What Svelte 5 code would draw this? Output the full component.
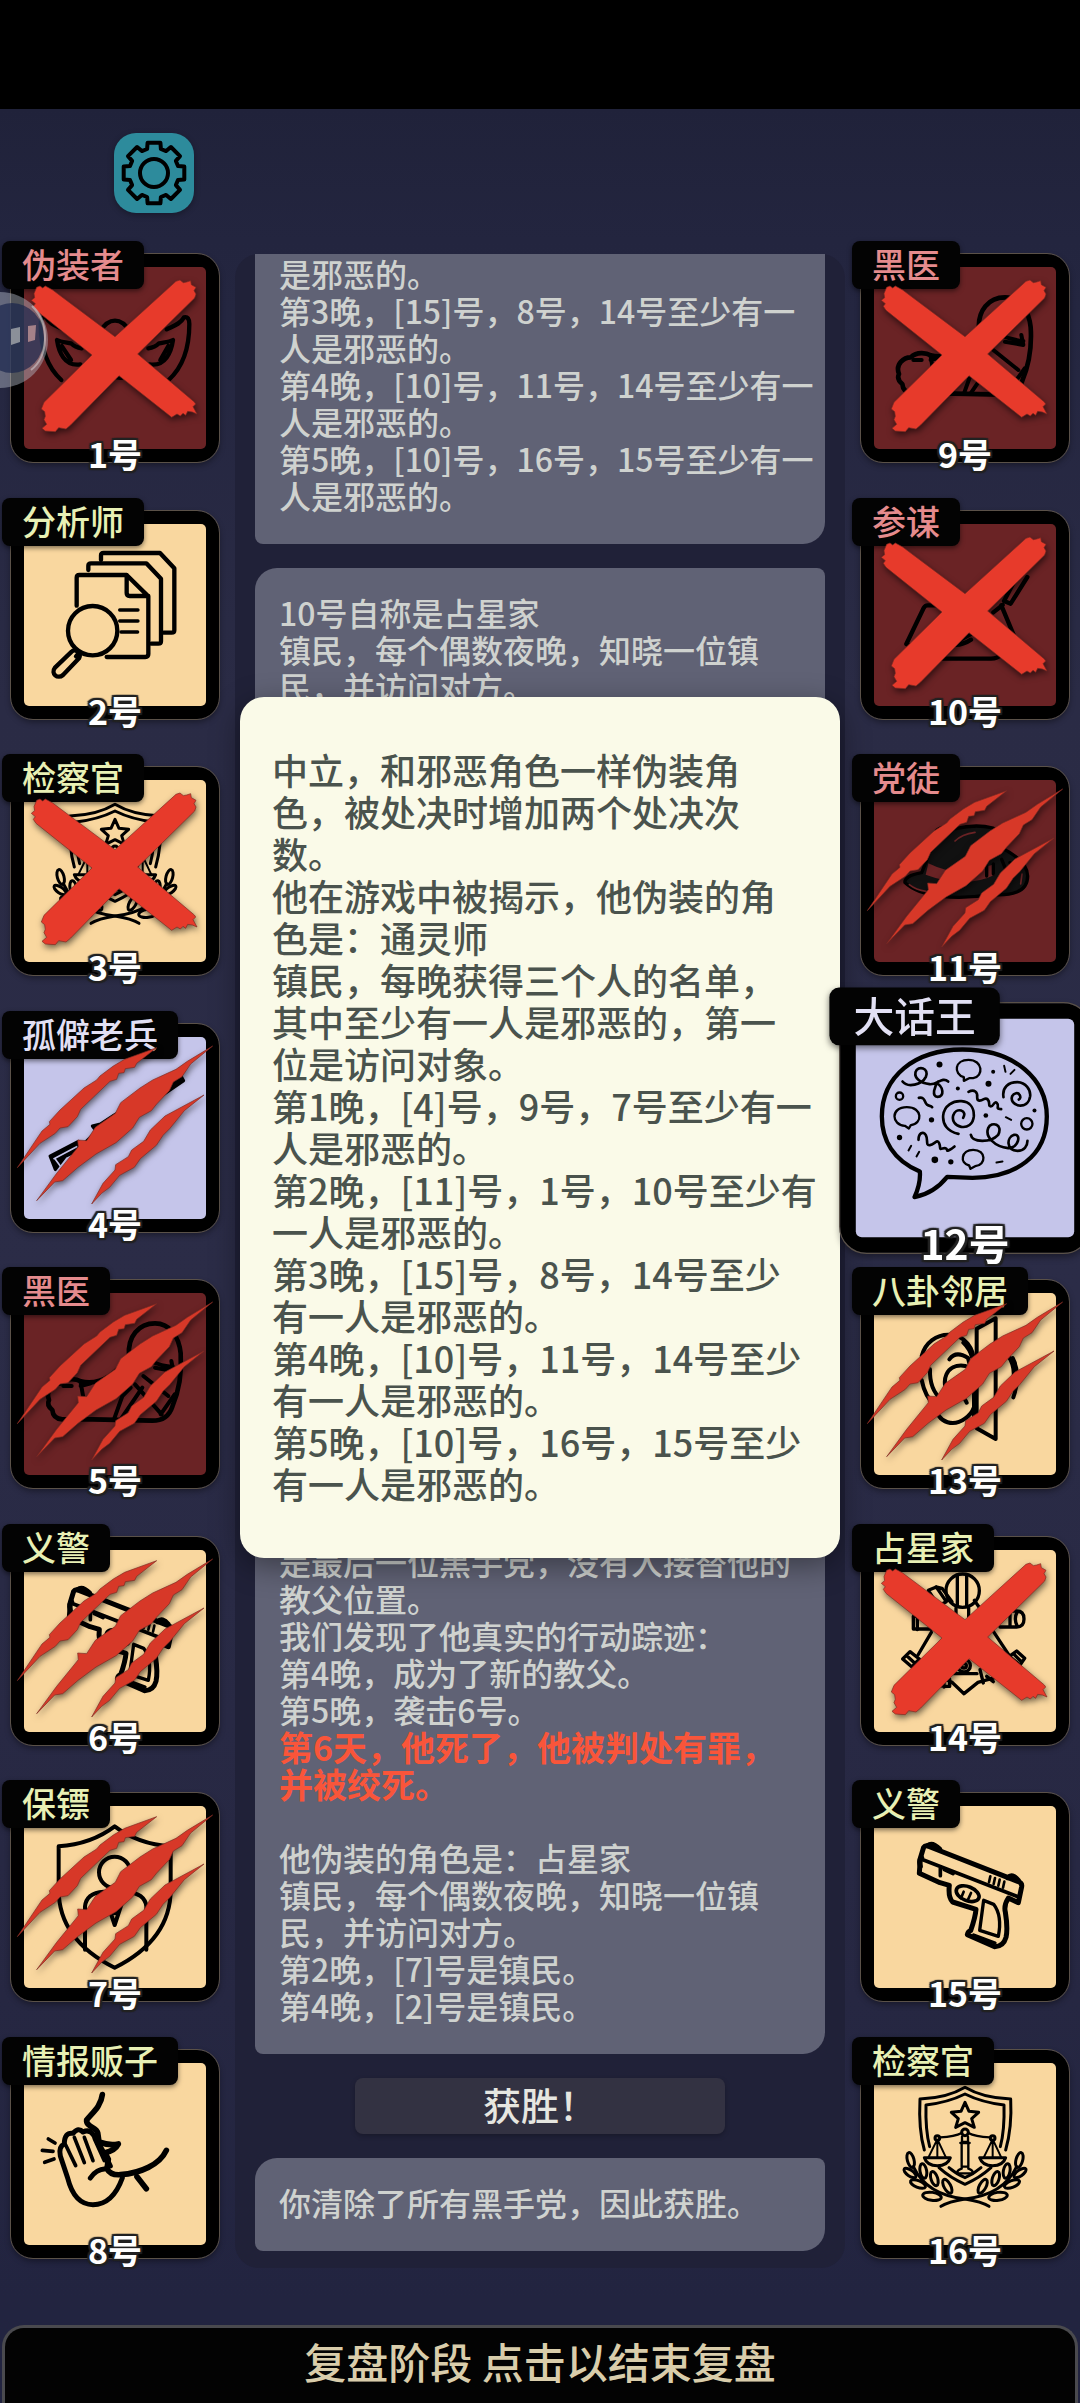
<script lang="ts">
    type Player = {
        id: number;
        role: string;
        side: 'evil' | 'town' | 'neutral';
        icon: string;
        mark?: 'cross' | 'claw';
        active?: boolean;
    }

    const left: Player[] = [
        { id: 1, role: '伪装者', side: 'evil', icon: 'mask', mark: 'cross' },
        { id: 2, role: '分析师', side: 'town', icon: 'analyst' },
        { id: 3, role: '检察官', side: 'town', icon: 'law', mark: 'cross' },
        { id: 4, role: '孤僻老兵', side: 'neutral', icon: 'rifle', mark: 'claw' },
        { id: 5, role: '黑医', side: 'evil', icon: 'doctor', mark: 'claw' },
        { id: 6, role: '义警', side: 'town', icon: 'pistol', mark: 'claw' },
        { id: 7, role: '保镖', side: 'town', icon: 'guard', mark: 'claw' },
        { id: 8, role: '情报贩子', side: 'town', icon: 'whisper' },
    ]

    const right: Player[] = [
        { id: 9, role: '黑医', side: 'evil', icon: 'doctor', mark: 'cross' },
        { id: 10, role: '参谋', side: 'evil', icon: 'adviser', mark: 'cross' },
        { id: 11, role: '党徒', side: 'evil', icon: 'hat', mark: 'claw' },
        { id: 12, role: '大话王', side: 'neutral', icon: 'talk', active: true },
        { id: 13, role: '八卦邻居', side: 'town', icon: 'ear', mark: 'claw' },
        { id: 14, role: '占星家', side: 'town', icon: 'stars', mark: 'cross' },
        { id: 15, role: '义警', side: 'town', icon: 'pistol' },
        { id: 16, role: '检察官', side: 'town', icon: 'law' },
    ]

    const nightLog = `是邪恶的。
第3晚，[15]号，8号，14号至少有一
人是邪恶的。
第4晚，[10]号，11号，14号至少有一
人是邪恶的。
第5晚，[10]号，16号，15号至少有一
人是邪恶的。`

    const claimLog = `10号自称是占星家
镇民，每个偶数夜晚，知晓一位镇
民，并访问对方。`

    const traceLog = `是最后一位黑手党，没有人接替他的
教父位置。
我们发现了他真实的行动踪迹：
第4晚，成为了新的教父。
第5晚，袭击6号。`

    const deathLog = `第6天，他死了，他被判处有罪，
并被绞死。`

    const disguiseLog = `他伪装的角色是：占星家
镇民，每个偶数夜晚，知晓一位镇
民，并访问对方。
第2晚，[7]号是镇民。
第4晚，[2]号是镇民。`

    const detail = `中立，和邪恶角色一样伪装角
色，被处决时增加两个处决次
数。
他在游戏中被揭示，他伪装的角
色是：通灵师
镇民，每晚获得三个人的名单，
其中至少有一人是邪恶的，第一
位是访问对象。
第1晚，[4]号，9号，7号至少有一
人是邪恶的。
第2晚，[11]号，1号，10号至少有
一人是邪恶的。
第3晚，[15]号，8号，14号至少
有一人是邪恶的。
第4晚，[10]号，11号，14号至少
有一人是邪恶的。
第5晚，[10]号，16号，15号至少
有一人是邪恶的。`

    let showDetail = $state(true)

    // eight-toothed gear outline around the origin
    const gear = (() => {
        const pts: string[] = []
        for (let i = 0; i < 8; i++) {
            const a = i * 45 - 90
            for (const [d, r] of [[-16, 25], [-12, 31], [12, 31], [16, 25]]) {
                const t = ((a + d) * Math.PI) / 180
                pts.push(`${(Math.cos(t) * r).toFixed(1)},${(Math.sin(t) * r).toFixed(1)}`)
            }
        }
        return pts.join(' ')
    })()
</script>

{#snippet wreath()}
    <path d="M175 365Q215 450 330 462Q380 470 402 484" />
    <ellipse cx="167" cy="345" rx="10" ry="23" transform="rotate(-15 167 345)" />
    <ellipse cx="165" cy="384" rx="21" ry="9" transform="rotate(35 165 384)" />
    <ellipse cx="205" cy="378" rx="10" ry="22" transform="rotate(-10 205 378)" />
    <ellipse cx="189" cy="417" rx="24" ry="10" transform="rotate(22 189 417)" />
    <ellipse cx="238" cy="401" rx="10" ry="22" transform="rotate(-18 238 401)" />
    <ellipse cx="231" cy="454" rx="28" ry="12" transform="rotate(8 231 454)" />
    <ellipse cx="277" cy="424" rx="10" ry="23" transform="rotate(-28 277 424)" />
{/snippet}

{#snippet icon(name: string)}
    {#if name === 'mask'}
        <svg class="art" viewBox="33 42 624 624" stroke="#111" stroke-width="13">
            <path d="M300 275c15-25 30-33 45-33s30 8 45 33M500 268c20-10 40-15 52-36q16-4 16 20c0 60-15 125-62 168M190 268c-20-10-40-15-52-36q-16-4-16 20c0 60 15 125 62 168M325 395q20 22 42 18" />
            <path d="M445 325c15-2 25-8 32-15c15-3 32-4 42-10c-5 35-22 80-70 73M505 318l-24 42M245 325c-15-2-25-8-32-15c-15-3-32-4-42-10c5 35 22 80 70 73M185 318l28 42" />
        </svg>
    {:else if name === 'analyst'}
        <svg class="art" viewBox="0 0 624 624" stroke-width="13">
            <path d="M270 147v-14q0-7 8-7h169l43 46v186q0 7-8 7h-24" />
            <path d="M232 177v-13q0-7 8-7h166l44 46v188q0 7-8 7h-21" />
            <path d="M197 284v-84q0-8 8-8h142l65 64v173q0 9-9 9H287M347 192v54q0 9 9 9h56" />
            <path d="M326 297h55M326 330h55M330 363h50" stroke-width="10" />
            <circle cx="245" cy="359" r="74" />
            <path d="M205 424l-10 12M182 422l-50 48c-14 18 8 36 24 22l48-50c8-14-12-32-22-20z" />
        </svg>
    {:else if name === 'law'}
        <svg class="art" viewBox="18 15 624 624" stroke-width="9">
            <path d="M208 315C195 270 192 220 195 162Q275 160 330 127Q385 160 467 162C470 220 465 270 452 315M224 305C212 260 212 215 213 180Q280 172 330 147Q380 172 447 180C448 215 448 260 436 305M252 368Q285 398 330 418Q375 398 408 368M282 368Q305 388 330 398Q355 388 378 368" />
            <path d="M330 172l12 27 29 3-21 19 8 26-28-14-28 14 8-26-21-19 29-3z" />
            <path d="M255 277Q300 275 320 264M405 277Q360 275 340 264M321 275v16h18v-16M316 294h28M320 296v68M340 296v68M306 385q0-10 14-14v-6h20v6q14 4 14 14z" stroke-width="7" />
            <circle cx="247" cy="279" r="7" /><circle cx="413" cy="279" r="7" /><circle cx="330" cy="262" r="10" />
            <path d="M208 338h78q-8 24-39 24t-39-24zM374 338h78q-8 24-39 24t-39-24z" />
            <path d="M245 287l-25 51M249 287l24 51M247 287v51M411 287l-25 51M415 287l24 51M413 287v51" stroke-width="6" />
            {@render wreath()}
            <g transform="translate(660 0) scale(-1 1)">{@render wreath()}</g>
        </svg>
    {:else if name === 'rifle'}
        <svg class="art" viewBox="33 852 624 624" stroke-width="9">
            <path d="M150 1248l85-44 14 10 40-40-12-16 24-6 40-26 200-122 10 18-90 62-190 130-75 35-30 40z" fill="#000" />
            <path d="M162 1256l68-36M166 1258l22 30" stroke="#c5c5ea" stroke-width="5" />
        </svg>
    {:else if name === 'doctor'}
        <svg class="art" viewBox="33 62 624 624" stroke-width="14">
            <path d="M387 290c-5-60 30-98 78-98 45 0 72 40 77 90 4 60-4 110-25 160-10 30-30 42-60 42l-180-4h-90q-28-2-30-28-18-14-10-30c-12-30 15-50 35-50 20-20 50-12 60-6 40 10 90 0 145-76z" />
            <path d="M242 370l10 55M242 380l30-8M342 480l25-70 25-25M362 480l65-95M405 375l80 90M430 350l75 60M450 305q35 15 70 18M465 325l55 10-6-30M482 465l42-60M190 380h25" stroke-width="12" />
        </svg>
    {:else if name === 'pistol'}
        <svg class="art" viewBox="0 0 624 624" stroke-width="15">
            <path d="M178 196l10-33q4-6 12-4l270 106q14 4 12 16l-10 48-30-14q-14 22-9 42 8 50 2 76-8 28-34 28l-82-36q2-10 10-12 14-40 16-64l-70-22q-14-14-10-50l-28-8-62-28z" />
            <path d="M180 198l291 113M238 222v26M250 230l26 12" stroke-width="11" />
            <path d="M200 158q14-12 36 10M440 254q14-14 32 8M178 220q-6-20 4-26" />
            <ellipse cx="320" cy="302" rx="36" ry="21" transform="rotate(22 320 302)" stroke-width="11" />
            <path d="M368 322l-12 90 56 18c8-40 6-70-14-96zM338 426l64 24" stroke-width="10" />
            <path d="M308 296l-8 20M330 300l-10 22M388 250l-4 18M402 255l-4 18M416 260l-4 18M430 266l-4 18" stroke-width="8" />
        </svg>
    {:else if name === 'guard'}
        <svg class="art" viewBox="0 0 624 624" stroke-width="12">
            <path d="M311 100c50 38 110 56 168 60v130c0 120-80 190-168 234-88-44-168-114-168-234V160c58-4 118-22 168-60z" />
            <circle cx="311" cy="238" r="47" />
            <path d="M222 470V340q4-40 56-44l33 100 33-100q58 4 62 44v130M290 330h42l-12 30h-18z" />
        </svg>
    {:else if name === 'whisper'}
        <svg class="art" viewBox="0 0 624 624" stroke-width="15">
            <path d="M274 134c-4 36-32 56-47 76-3 20 30 22 33 38l4 28q32 12 58 6-10 20-40 26l10 20-4 28q10 20 40 18c60-4 118-30 138-73M378 380l28 36" stroke-width="17" />
            <path d="M334 384c-18 50-44 80-88 80s-66-40-76-80l-22-66q-6-28 12-36 0-36 26-32 16-20 30-4 20-10 32 10c20 30 36 62 50 92M238 384q16-26 46-28" />
            <path d="M164 285l30 62M190 262l30 76M220 262l26 70M250 266l30 66" stroke-width="11" />
            <path d="M112 267l20 12M94 301l32 3M101 337l28-10" stroke-width="11" />
        </svg>
    {:else if name === 'adviser'}
        <svg class="art" viewBox="0 0 624 624" stroke-width="13">
            <path d="M250 283h-50q-8 0-12 8l-52 108 90 44h164q20 0 30-12l48-35-47-113M499 198l-50 80-20-8 42-80M425 282l-28 22M270 400q30 6 60-14M300 385l40-22" />
        </svg>
    {:else if name === 'hat'}
        <svg class="art" viewBox="123 83 624 624" stroke-width="10">
            <path d="M255 430q-4-20 50-30l20-50c5-50 15-80 42-86q20-4 40 4c40-10 80-10 112-2q20 8 26 60c40 20 78 50 78 84 0 50-50 60-110 56-100 16-210 10-258-36z" fill="#111" />
            <path d="M325 372q60 30 120 26l80-24v32q-90 44-208 0z" fill="#6a2325" stroke="none" />
            <path d="M405 305q20-20 60-26M268 436q20 16 50 20M606 404l-4 30" stroke="#6a2325" stroke-width="5" />
            <path d="M500 380v30M520 374v30M545 360l16 40M570 370l20 30" />
        </svg>
    {:else if name === 'talk'}
        <svg class="art" viewBox="63 790 749 749" stroke-width="8">
            <path d="M302 1295C222 1262 188 1200 188 1130C188 1010 285 930 430 929C590 929 683 1020 683 1130C683 1250 590 1312 460 1314L384 1311Q345 1360 286 1372Q305 1330 302 1295z" stroke-width="13" />
            <path d="M434 1012c-32-10-28-52 14-52 44 0 46 50 14 55h-12l-16 8zM257 1158c-40-2-45-56 6-56 48 0 48 50 12 54l-6 10zM450 1277c-30-6-24-47 12-47 40 0 40 46 6 49l-14 8z" stroke-width="7" />
            <path d="M418 1182c-34-6-48-30-46-55 3-30 30-45 55-43 25 2 38 20 37 45-2 25-20 35-38 32-18-3-28-18-24-34 4-12 14-18 24-15 10 3 12 12 6 22M553 1072c-5-30 15-45 42-45 25 1 40 22 38 42-3 22-18 30-34 28-15-3-25-15-20-28 5-10 18-12 22-4 4 6 3 12-2 14" />
            <path d="M250 1025c16 20 58 10 70-14 12-26-24-36-31-14-4 18 15 33 42 36 22 3 38-24 56-8M357 1025c-12 14-20 46-2 46 22 0 18-32-4-42M299 1074c20-4 16 14 24 20 6 6 12 2 16 8" />
            <path d="M448 1056c18-10 28 2 26 16 0 14 10 12 20 6s16 4 16 14 8 10 14 0 14 0 12 8 6 8 10 8M298 1200c0-20 14-28 22-14s-2 32 12 30 22-20 28-6-2 20 10 16 14 4 14 6 10-2 22-12" />
            <path d="M455 1185c4 24 60 24 82 0 16-32-20-42-30-20-10 26 20 56 60 60 32 0 40-44 18-40-24 8-24 46 10 48 20 0 30-14 30-30" />
            <path d="M555 978l4 18M586 990l-12 12M268 1232l8-14M292 1250l8-14M560 1132l16 8M532 1268l18-3" stroke-width="6" />
            <circle cx="241" cy="1069" r="11" stroke-width="7" /><circle cx="623" cy="1152" r="17" stroke-width="7" />
            <g fill="#000" stroke="none">
                <circle cx="361" cy="974" r="9" /><circle cx="508" cy="1032" r="9" /><circle cx="522" cy="996" r="6" /><circle cx="416" cy="1046" r="6" />
                <circle cx="337" cy="1140" r="8" /><circle cx="500" cy="1127" r="7" /><circle cx="241" cy="1193" r="8" /><circle cx="347" cy="1260" r="10" />
                <circle cx="395" cy="1266" r="8" /><circle cx="646" cy="1112" r="6" />
            </g>
        </svg>
    {:else if name === 'ear'}
        <svg class="art" viewBox="123 62 624 624" stroke-width="12">
            <path d="M305 290c10-40 45-66 85-64 45 2 72 40 72 85v190M305 362c8 40 20 60 40 76 10 60 60 62 90 40q20-14 26-32M330 330q-2 60 34 90M388 300q20-28 56-4 14 40-8 60" />
            <path d="M436 320c-60-10-75 50-50 85M420 350c-22 10-16 40 0 50q16 20 20 30M470 208l57-31v362l-57-32zM565 290q28 40 8 100M578 296q26 50 2 118M430 250q20 20 26 44" />
        </svg>
    {:else if name === 'stars'}
        <svg class="art" viewBox="123 832 624 624" stroke-width="10">
            <circle cx="428" cy="993" r="50" />
            <path d="M412 946v94M440 946v94M408 1045v50M446 1045v50M325 992l24-10 30 44-24 12zM348 982l18 4 30 40M375 1026l14-8M463 1022l14 20" />
            <path d="M280 1070v38h55M292 1066v44M280 1070h20M540 1102h50q22 0 22-24t-22-24h-20v48M592 1056q-12 22 0 44M334 1118l-40 68M520 1115l46 70" />
            <path d="M248 1198l22-22 28 22-22 24zM262 1190l24 22M568 1190l22-16 24 22-14 20zM580 1182l24 24" />
            <circle cx="432" cy="1218" r="19" /><circle cx="432" cy="1218" r="7" />
            <path d="M395 1242h76M340 1262l30-6 26 12 36 34 42-34 50-14M345 1278l44 2v-22M480 1230l10 40M372 1262v20M500 1250l20 16" />
        </svg>
    {/if}
{/snippet}

{#snippet card(p: Player)}
    <button class="card {p.side}" class:active={p.active} onclick={() => { if (p.active) showDetail = !showDetail }}>
        {@render icon(p.icon)}
        <span class="role">{p.role}</span>
        {#if p.mark === 'cross'}
            <svg class="mark" viewBox="33 42 624 624">
                <path fill="#e73a2b" d="M110 142l10-4 8 6 8-6 22 12 187 140 183-166 12-4 10 8 10-2 12-4 2 12 14 8-6 10 6 10-4 12-171 168 170 144 4 6-8 8 12 22-14-6-14-2-6 12-8-6-8 8-10-6-16 10-158-125-145 148-14 12-22-4-10 12-30-2-10-8 14-12-8-14 4-10-2-14-10-8 8-20 144-142-168-134-8-12 6-8-12-10 10-8-2-12z" />
            </svg>
        {:else if p.mark === 'claw'}
            <svg class="mark" viewBox="33 852 624 624">
                <g fill="#d73828">
                    <path d="M52 1283l74-110 24-20-2-8 32-35 72-66 38-24 10-12 40-30 34-20 96-35-60 47-6 12-28 4-4 12-16 2-6 18-20 6-88 84-10 22-28 30-24 4-14 16-46 30z" />
                    <path d="M110 1382l60-82 65-80-2-20 27 2 26-40 60-42 16-32 58-44 38-24 70-32 34-24 76-46-66 54-26 38-26 16-12 26-38 40-16 20-36 20-20 32-50 44-60 34-54 40-46 40-24 4z" />
                    <path d="M275 1392l34-62 36-40 2-16 38-24 10-20 36-26 20-34 44-42 117-63-59 47-44 54-20 20-20 30-48 40-18 26-44 24-30 36-24 18z" />
                </g>
            </svg>
        {/if}
        <span class="number">{p.id}号</span>
    </button>
{/snippet}

<div class="page">
    <div class="notch"></div>

    <header>
        <button class="settings" aria-label="设置">
            <svg viewBox="-40 -40 80 80">
                <polygon points={gear} />
                <circle r="14" />
            </svg>
        </button>
    </header>

    <main>
        <div class="column">
            {#each left as p}
                {@render card(p)}
            {/each}
        </div>

        <section class="center">
            <div class="log">
                <p class="message cut">{nightLog}</p>
                <p class="message">{claimLog}</p>
                <div class="message long">
                    <p>{traceLog}</p>
                    <p class="death">{deathLog}</p>
                    <p class="gap">{disguiseLog}</p>
                </div>
                <h2>获胜！</h2>
                <p class="message">你清除了所有黑手党，因此获胜。</p>
            </div>
            {#if showDetail}
                <div class="detail">{detail}</div>
            {/if}
        </section>

        <div class="column front">
            {#each right as p}
                {@render card(p)}
            {/each}
        </div>
    </main>

    <button class="finish">复盘阶段 点击以结束复盘</button>

    <button class="float" aria-label="悬浮球">
        <svg viewBox="0 0 48 96">
            <circle cx="0" cy="48" r="48" fill="#b4bac8" fill-opacity="0.45" />
            <ellipse cx="12" cy="46" rx="32" ry="35" fill="#14204a" fill-opacity="0.65" />
            <path d="M32 14q14 14 13 34t-14 30" fill="none" stroke="#d0c8cc" stroke-opacity="0.6" stroke-width="2" />
            <path d="M11 37l9-2v15l-9 3z" fill="#8b9099" />
            <path d="M28 34l8-1-1 15-7 2z" fill="#a58189" />
        </svg>
    </button>
</div>

<style>
    :global(body) {
        margin: 0;
        background: #22243f;
    }

    .page {
        position: relative;
        display: flex;
        flex-direction: column;
        min-height: 100vh;
        overflow: hidden;
        background: linear-gradient(#20223a 110px, #23253f 240px, #2a2b45 700px, #2b2c47 1300px, #262742 2000px, #222440 2300px);
        font-family: "Noto Sans CJK SC", "Noto Sans", sans-serif;
        font-weight: 500;
    }

    button {
        padding: 0;
        border: none;
        font-family: inherit;
        font-weight: inherit;
        cursor: pointer;
    }

    p, h2 {
        margin: 0;
    }

    .notch {
        height: 109px;
        background: #000;
    }

    header {
        padding: 24px 114px 41px;
    }

    .settings {
        display: block;
        width: 80px;
        height: 80px;
        border-radius: 22px;
        background: #2d8b9c;
        box-shadow: 0 2px 6px rgba(0, 0, 0, 0.3);
    }

    .settings svg {
        display: block;
        fill: none;
        stroke: #000;
        stroke-width: 4;
        stroke-linejoin: round;
    }

    main {
        flex: 1;
        display: grid;
        grid-template-columns: 208px 1fr 208px;
        gap: 16px;
        padding: 0 11px;
        margin-bottom: 57px;
    }

    .column {
        display: flex;
        flex-direction: column;
        justify-content: space-between;
        gap: 24px;
        padding-bottom: 10px;
    }

    .front {
        position: relative;
        z-index: 2;
    }

    .card {
        position: relative;
        width: 208px;
        height: 208px;
        border: 13px solid #000;
        border-radius: 22px;
        outline: 1px solid #5a5148;
        box-shadow: 0 3px 6px rgba(0, 0, 0, 0.4);
        background: #000;
    }

    /* the coloured face keeps its own small corner radius */
    .card::before {
        content: '';
        position: absolute;
        inset: 0;
        border-radius: 5px;
        background: var(--face);
    }

    .evil {
        --face: #6a2325;
        --label: #e58b8d;
    }

    .town {
        --face: #f9d79f;
        --label: #e8f0b4;
    }

    .neutral {
        --face: #c5c5ea;
        --label: #e2e0f4;
    }

    .active {
        transform: scale(1.2);
    }

    .art, .mark {
        position: absolute;
        top: -13px;
        left: -13px;
        width: 208px;
        height: 208px;
        overflow: visible;
    }

    .art {
        fill: none;
        stroke: #000;
        stroke-linecap: round;
        stroke-linejoin: round;
    }

    .mark {
        stroke: #7c2a22;
        stroke-width: 2;
        filter: drop-shadow(1px 3px 3px rgba(0, 0, 0, 0.55));
    }

    .role {
        position: absolute;
        top: -26px;
        left: -22px;
        padding: 0 20px 2px;
        border-radius: 8px;
        background: #030303;
        box-shadow: 0 2px 5px rgba(0, 0, 0, 0.5);
        color: var(--label);
        font-size: 34px;
        line-height: 46px;
        white-space: nowrap;
    }

    .number {
        position: absolute;
        bottom: -29px;
        left: 0;
        right: 0;
        color: #fff;
        font-size: 34px;
        font-weight: 700;
        line-height: 48px;
        text-align: center;
        text-shadow: 2px 0 1px #222, -2px 0 1px #222, 0 2px 1px #222, 0 -2px 1px #222,
            2px 2px 1px #222, -2px 2px 1px #222, 2px -2px 1px #222, -2px -2px 1px #222;
    }

    .center {
        position: relative;
        display: flex;
        flex-direction: column;
        min-width: 0;
    }

    .log {
        flex: 1;
        display: flex;
        flex-direction: column;
        gap: 24px;
        padding: 0 20px 17px;
        border-radius: 24px;
        background: #202138;
    }

    .message {
        padding: 26px 24px 30px;
        border-radius: 22px 8px 22px 8px;
        background: #606275;
        color: #cfd2cf;
        font-size: 32px;
        line-height: 37px;
        white-space: pre;
    }

    .cut {
        padding-top: 1px;
        border-top-left-radius: 0;
        border-top-right-radius: 0;
    }

    .long {
        flex: 1;
        display: flex;
        flex-direction: column;
        justify-content: flex-end;
    }

    .death {
        color: #f9553a;
        font-size: 34px;
        font-weight: 700;
    }

    .gap {
        margin-top: 37px;
    }

    h2 {
        align-self: center;
        box-sizing: border-box;
        width: 65%;
        padding-bottom: 4px;
        border-radius: 8px;
        background: #333242;
        box-shadow: 0 2px 5px rgba(0, 0, 0, 0.25);
        color: #e6e6e0;
        font-size: 38px;
        font-weight: 500;
        line-height: 52px;
        text-align: center;
    }

    .detail {
        position: absolute;
        top: 443px;
        left: 5px;
        right: 5px;
        z-index: 1;
        padding: 51px 32px 54px;
        border-radius: 24px;
        background: #fafae8;
        box-shadow: 0 8px 30px rgba(0, 0, 0, 0.4);
        color: #4a534d;
        font-size: 36px;
        line-height: 42px;
        white-space: pre;
    }

    .finish {
        margin: 0 2px;
        padding-bottom: 10px;
        border: 3px solid #4a4a4e;
        border-bottom: none;
        border-radius: 22px 22px 0 0;
        background: #030303;
        color: #d9cdab;
        font-size: 42px;
        line-height: 65px;
    }

    .float {
        position: absolute;
        top: 292px;
        left: 0;
        z-index: 3;
        width: 48px;
        height: 96px;
        background: none;
    }

    .float svg {
        display: block;
    }
</style>
